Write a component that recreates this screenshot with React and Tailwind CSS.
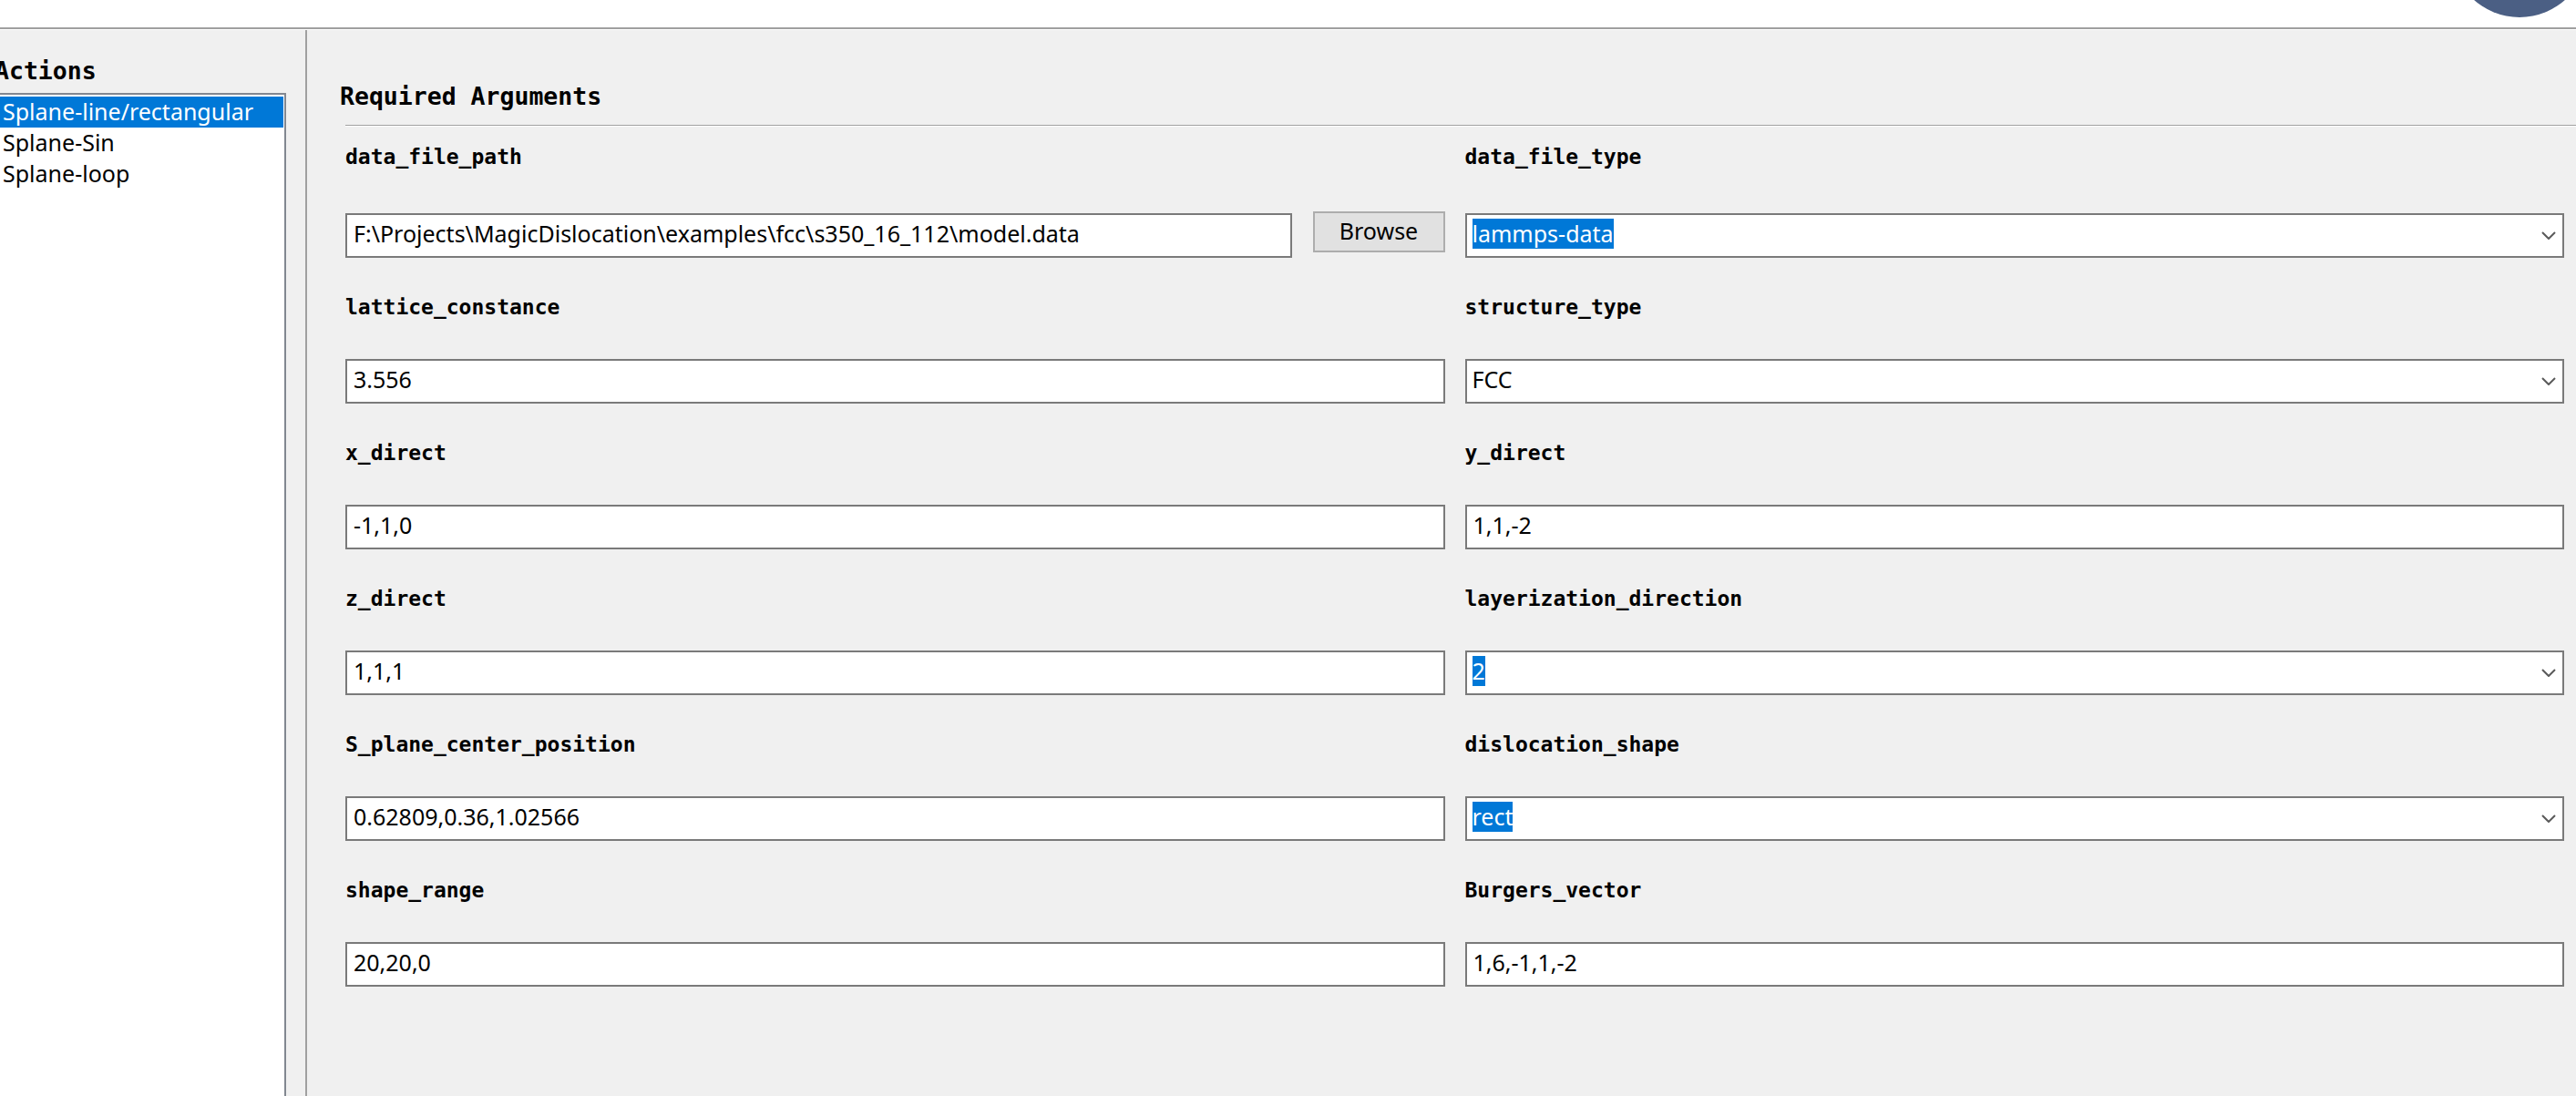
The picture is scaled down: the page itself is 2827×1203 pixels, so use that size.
import React from 'react';

const leftItems = ['Splane-line/rectangular', 'Splane-Sin', 'Splane-loop'];

const Label = ({ children }) => (
  <div className="h-[23px] text-[23px] leading-[23px] font-bold text-black font-['DejaVu_Sans_Mono',monospace] whitespace-nowrap">
    {children}
  </div>
);

const TextBox = ({ value }) => (
  <div className="h-[49px] border-2 border-[#7a7a7a] bg-white flex items-center pl-[7px] pb-[3px] text-[25px] text-black whitespace-nowrap overflow-hidden">
    {value}
  </div>
);

const Combo = ({ value, selected }) => (
  <div className="h-[49px] border-2 border-[#7a7a7a] bg-white flex items-center justify-between pl-[6px] pr-[7px] text-[25px]">
    <span className={selected ? 'mb-[4px] leading-[33px] bg-[#0078d7] text-white' : 'mb-[4px] leading-[33px] text-black'}>
      {value}
    </span>
    <svg width="16" height="9" viewBox="0 0 16 9" className="shrink-0">
      <polyline points="1,1 8,8 15,1" fill="none" stroke="#5a5a5a" strokeWidth="2" />
    </svg>
  </div>
);

// first row sits a bit higher above its box than the others
const Cell = ({ label, first, children }) => (
  <div className="flex flex-col">
    <Label>{label}</Label>
    <div className={first ? 'mt-[50px]' : 'mt-[45px]'}>{children}</div>
  </div>
);

export default function App() {
  return (
    <div className="relative h-screen w-full overflow-hidden bg-[#f0f0f0] font-['Noto_Sans',sans-serif] flex flex-col">
      {/* top strip */}
      <div className="h-[30px] bg-white shrink-0" />
      <div className="h-[2px] bg-[#a0a0a0] shrink-0" />
      <div className="h-[1px] bg-white shrink-0" />

      <div className="flex flex-1 min-h-0">
        {/* actions panel */}
        <div className="w-[335px] shrink-0 overflow-hidden flex flex-col">
          <div className="mt-[31px] -ml-[6px] h-[27px] text-[26.5px] leading-[27px] font-bold text-black font-['DejaVu_Sans_Mono',monospace] whitespace-nowrap">
            Actions
          </div>
          <div className="mt-[11px] w-[314px] flex-1 bg-white border-t-2 border-r-2 border-[#828790] pt-[2px]">
            {leftItems.map((item, i) => (
              <div
                key={item}
                className={
                  i === 0
                    ? 'h-[34px] w-[311px] pl-[3px] flex items-center text-[25px] bg-[#0078d7] text-white whitespace-nowrap'
                    : 'h-[34px] w-[311px] pl-[3px] flex items-center text-[25px] text-black whitespace-nowrap'
                }
              >
                {item}
              </div>
            ))}
          </div>
        </div>

        {/* arguments panel */}
        <div className="flex-1 border-l-2 border-[#a0a0a0] flex flex-col">
          <div className="mt-[59px] pl-[36px] h-[27px] text-[26.5px] leading-[27px] font-bold text-black font-['DejaVu_Sans_Mono',monospace] whitespace-nowrap">
            Required Arguments
          </div>
          <div className="mt-[18px] ml-[42px] h-[1px] bg-[#a0a0a0]" />
          <div className="ml-[42px] h-[1px] bg-white" />

          <div className="pt-[22px] pl-[42px] pr-[13px] grid grid-cols-2 gap-x-[22px] gap-y-[43px]">
            <Cell label="data_file_path" first>
              <div className="flex items-start">
                <div className="flex-1">
                  <TextBox value="F:\Projects\MagicDislocation\examples\fcc\s350_16_112\model.data" />
                </div>
                <button className="ml-[23px] -mt-[2px] w-[145px] h-[45px] border-2 border-[#adadad] bg-[#e1e1e1] text-[25px] text-black flex items-center justify-center pb-[2px]">
                  Browse
                </button>
              </div>
            </Cell>
            <Cell label="data_file_type" first>
              <Combo value="lammps-data" selected />
            </Cell>

            <Cell label="lattice_constance">
              <TextBox value="3.556" />
            </Cell>
            <Cell label="structure_type">
              <Combo value="FCC" />
            </Cell>

            <Cell label="x_direct">
              <TextBox value="-1,1,0" />
            </Cell>
            <Cell label="y_direct">
              <TextBox value="1,1,-2" />
            </Cell>

            <Cell label="z_direct">
              <TextBox value="1,1,1" />
            </Cell>
            <Cell label="layerization_direction">
              <Combo value="2" selected />
            </Cell>

            <Cell label="S_plane_center_position">
              <TextBox value="0.62809,0.36,1.02566" />
            </Cell>
            <Cell label="dislocation_shape">
              <Combo value="rect" selected />
            </Cell>

            <Cell label="shape_range">
              <TextBox value="20,20,0" />
            </Cell>
            <Cell label="Burgers_vector">
              <TextBox value="1,6,-1,1,-2" />
            </Cell>
          </div>
        </div>
      </div>

      {/* partially visible round badge at top right */}
      <div className="absolute left-[2690px] -top-[131px] w-[150px] h-[150px] rounded-full bg-[#4b5f84]" />
    </div>
  );
}
